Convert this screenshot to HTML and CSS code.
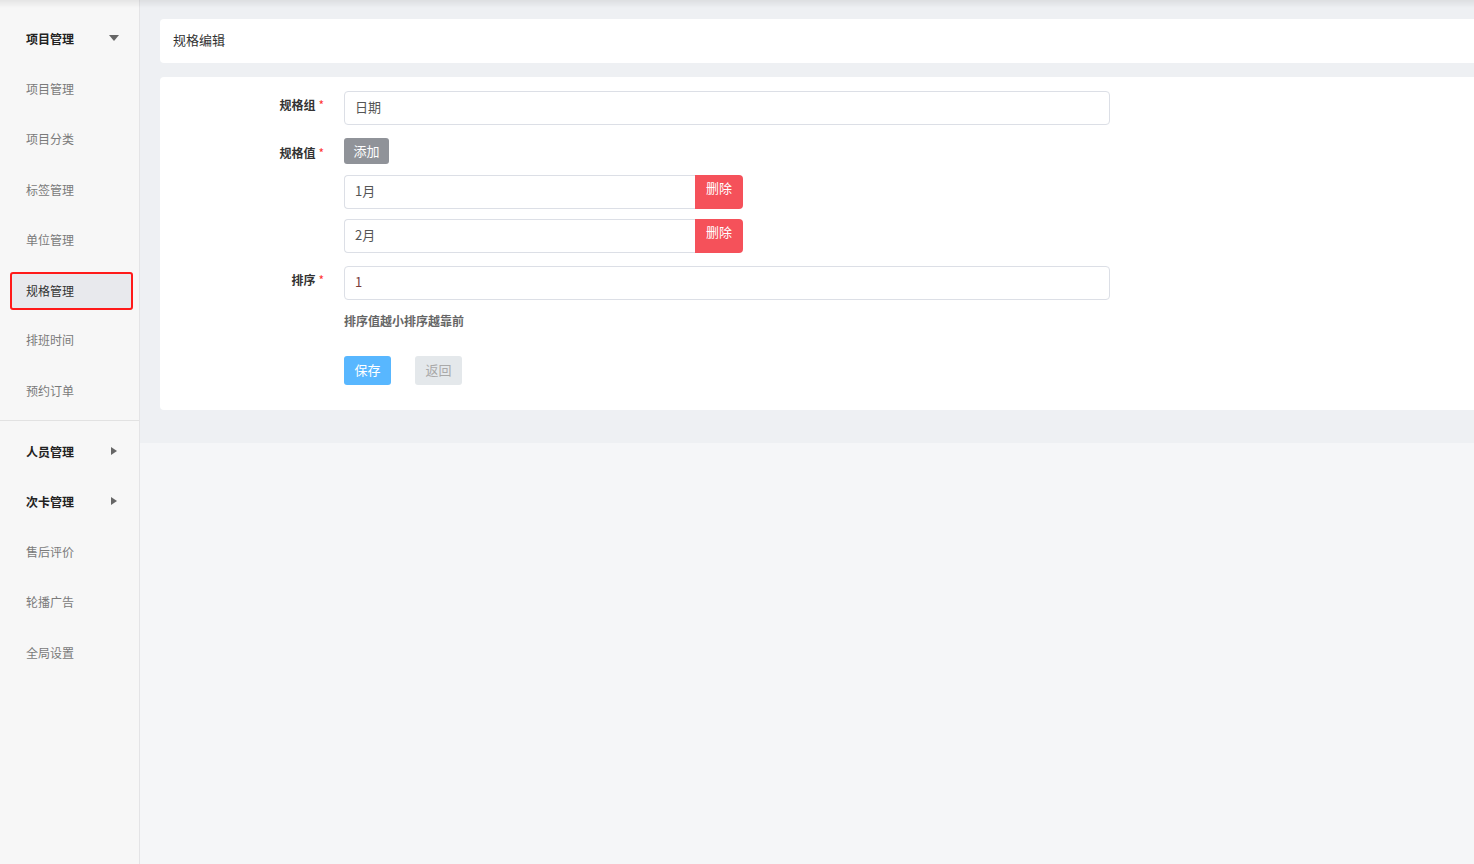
FILE: index.html
```html
<!DOCTYPE html>
<html lang="zh-CN">
<head>
<meta charset="utf-8">
<title>规格编辑</title>
<link rel="stylesheet" href="styles.css">
</head>
<body>
<div class="layout">
  <aside class="sidebar">
    <div class="group">
      <div class="item head"><span>项目管理</span><span class="tri-down"></span></div>
      <div class="item">项目管理</div>
      <div class="item">项目分类</div>
      <div class="item">标签管理</div>
      <div class="item">单位管理</div>
      <div class="item active">规格管理</div>
      <div class="item">排班时间</div>
      <div class="item">预约订单</div>
    </div>
    <div class="group">
      <div class="item head"><span>人员管理</span><span class="tri-right"></span></div>
      <div class="item head"><span>次卡管理</span><span class="tri-right"></span></div>
      <div class="item">售后评价</div>
      <div class="item">轮播广告</div>
      <div class="item">全局设置</div>
    </div>
  </aside>
  <main class="main">
    <div class="content">
      <div class="card title-card">规格编辑</div>
      <div class="card form-card">
        <div class="row">
          <div class="label">规格组<i>*</i></div>
          <div class="field"><div class="input wide">日期</div></div>
        </div>
        <div class="row values">
          <div class="label">规格值<i>*</i></div>
          <div class="field">
            <button class="btn add">添加</button>
            <div class="value-list">
              <div class="value-row"><div class="input short">1月</div><button class="btn del">删除</button></div>
              <div class="value-row"><div class="input short">2月</div><button class="btn del">删除</button></div>
            </div>
          </div>
        </div>
        <div class="row">
          <div class="label">排序<i>*</i></div>
          <div class="field">
            <div class="input wide num">1</div>
            <div class="hint">排序值越小排序越靠前</div>
            <div class="actions">
              <button class="btn save">保存</button>
              <button class="btn back">返回</button>
            </div>
          </div>
        </div>
      </div>
    </div>
  </main>
</div>
</body>
</html>
```

FILE: styles.css
```css
* { box-sizing: border-box; }
html, body { margin: 0; padding: 0; height: 100%; }
body {
  font-family: "Noto Sans CJK SC", "Noto Sans", "Liberation Sans", sans-serif;
  font-size: 12px;
  color: #333;
  background: #f5f6f8;
}
body::before {
  content: "";
  position: fixed;
  top: 0; left: 0; right: 0;
  height: 8px;
  background: linear-gradient(rgba(0,0,0,0.07), rgba(0,0,0,0));
  pointer-events: none;
  z-index: 5;
}
.layout {
  display: flex;
  min-height: 100vh;
}
.sidebar {
  width: 140px;
  flex: none;
  background: #f7f7f7;
  border-right: 1px solid #e4e4e6;
  padding-top: 13px;
}
.group:first-child { border-bottom: 1px solid #e2e2e2; padding-bottom: 5px; margin-bottom: 4.5px; }
.item {
  height: 50.3px;
  margin: 0 6px 0 10px;
  padding: 0 12px 0 14px;
  border: 2px solid transparent;
  border-radius: 3px;
  display: flex;
  align-items: center;
  justify-content: space-between;
  color: #7a7a7a;
  font-size: 12px;
}
.item.head { color: #222; font-weight: 700; }
.item.active {
  height: 38px;
  margin-top: 7.5px;
  margin-bottom: 4.8px;
  border-color: #ff1a1a;
  background: #e8e9ed;
  color: #333;
}
.tri-down {
  width: 0; height: 0;
  border-left: 5px solid transparent;
  border-right: 5px solid transparent;
  border-top: 6px solid #666;
}
.tri-right {
  width: 0; height: 0;
  border-top: 4px solid transparent;
  border-bottom: 4px solid transparent;
  border-left: 6px solid #666;
  margin-right: 2px;
}
.main {
  flex: 1;
  min-width: 0;
}
.content {
  background: #eef0f3;
  padding: 19px 0 33px 20px;
}
.card {
  background: #fff;
  border-radius: 4px 0 0 4px;
}
.title-card {
  height: 44px;
  display: flex;
  align-items: center;
  padding-left: 13px;
  padding-bottom: 3px;
  font-size: 13px;
  color: #333;
  margin-bottom: 14px;
}
.form-card {
  padding: 14px 0 25px 0;
}
.row {
  display: flex;
  align-items: flex-start;
  margin-bottom: 13px;
}
.row:last-child { margin-bottom: 0; }
.label {
  width: 184px;
  flex: none;
  text-align: right;
  padding-right: 20px;
  font-weight: 700;
  font-size: 12px;
  color: #333;
  line-height: 28px;
}
.label i {
  font-style: normal;
  font-weight: 400;
  color: #f33;
  margin-left: 3px;
}
.row.values .label { line-height: 30px; }
.input {
  height: 34px;
  border: 1px solid #dcdfe6;
  border-radius: 4px;
  padding-left: 10px;
  padding-bottom: 3px;
  display: flex;
  align-items: center;
  font-size: 13px;
  color: #555;
  background: #fff;
}
.input.wide { width: 766px; }
.input.num { color: #7a3c3c; }
.value-list {
  margin-top: 11px;
  display: flex;
  flex-direction: column;
  gap: 10px;
}
.value-row { display: flex; }
.input.short {
  width: 351px;
  border-radius: 4px 0 0 4px;
  border-right: none;
}
.btn {
  font-family: inherit;
  border: none;
  cursor: pointer;
  padding: 0;
  font-size: 13px;
}
.add {
  width: 45px;
  height: 26px;
  background: #909399;
  color: #fff;
  border-radius: 3px;
  display: block;
  padding-bottom: 2px;
}
.del {
  width: 48px;
  height: 34px;
  background: #f5515a;
  color: #fff;
  border-radius: 0 4px 4px 0;
  padding-bottom: 10px;
}
.hint {
  margin-top: 13px;
  font-size: 12px;
  font-weight: 700;
  color: #666;
  line-height: 16px;
}
.actions {
  margin-top: 27px;
  display: flex;
  gap: 24px;
}
.save {
  width: 47px;
  height: 29px;
  background: #58b7ff;
  color: #fff;
  border-radius: 3px;
  padding-bottom: 3px;
}
.back {
  width: 47px;
  height: 29px;
  background: #e4e8eb;
  color: #a9a9a9;
  border-radius: 3px;
  padding-bottom: 3px;
}
```
